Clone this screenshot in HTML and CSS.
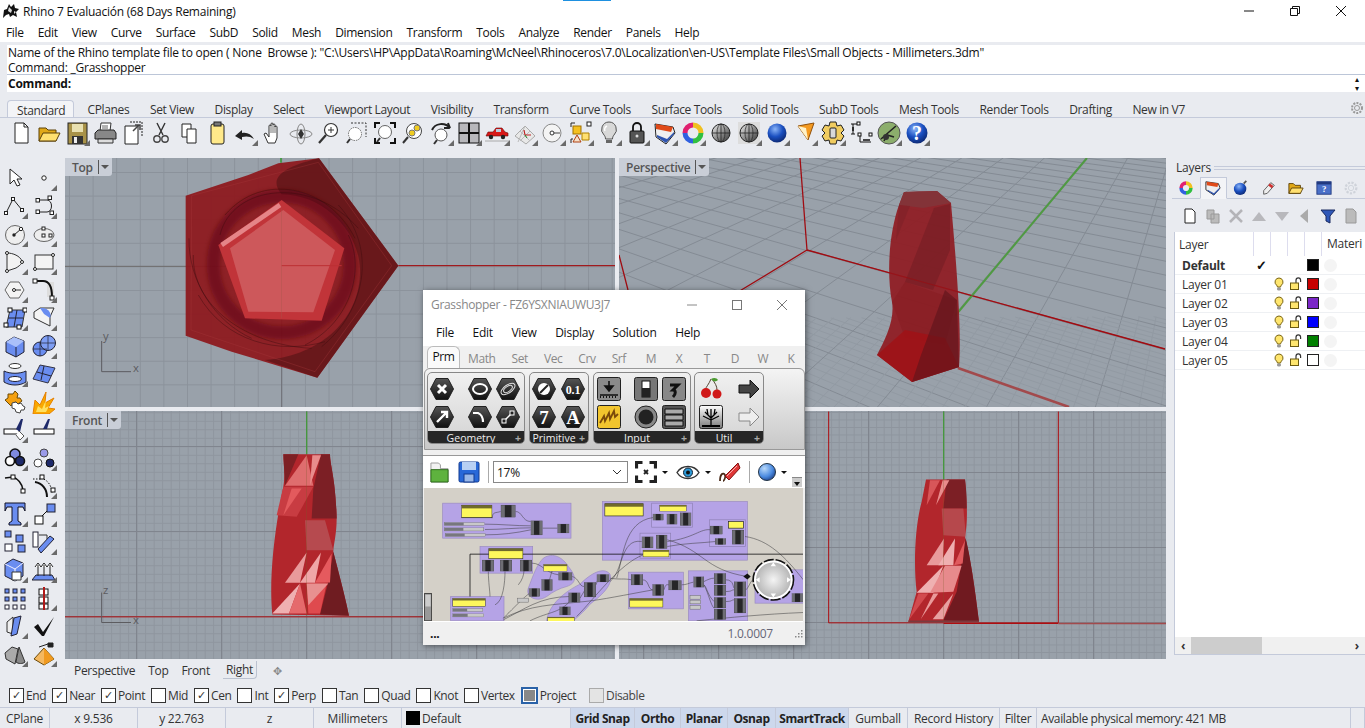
FILE: index.html
```html
<!DOCTYPE html>
<html lang="en">
  <head>
    <meta charset="UTF-8" />
    <title>Rhino 7</title>
    <link rel="stylesheet" href="styles.css">
  </head>
  <body>
    <svg class="defs" width="0" height="0">
      <defs>
        <linearGradient id="sphere" x1="0" y1="0" x2="1" y2="1"><stop offset="0" stop-color="#eee"/><stop offset="1" stop-color="#333"/></linearGradient>
        <radialGradient id="bluesphere" cx=".4" cy=".3" r=".8"><stop offset="0" stop-color="#8ab4f8"/><stop offset=".5" stop-color="#1a4fc0"/><stop offset="1" stop-color="#0a1f60"/></radialGradient>
        <radialGradient id="ghball" cx=".35" cy=".3" r=".8"><stop offset="0" stop-color="#b8d8fa"/><stop offset=".6" stop-color="#4a8ae0"/><stop offset="1" stop-color="#1a3a80"/></radialGradient>
        <radialGradient id="knob" cx=".5" cy=".5" r=".5"><stop offset="0" stop-color="#f4f4f4"/><stop offset="1" stop-color="#b4b4b4"/></radialGradient>
        <linearGradient id="hexfill" x1="0" y1="0" x2="0" y2="1"><stop offset="0" stop-color="#555"/><stop offset="1" stop-color="#111"/></linearGradient>
        <linearGradient id="treesky" x1="0" y1="0" x2="0" y2="1"><stop offset="0" stop-color="#fff"/><stop offset="1" stop-color="#777"/></linearGradient>
        <filter id="soft" x="-20%" y="-20%" width="140%" height="140%"><feGaussianBlur stdDeviation="7"/></filter>
        <symbol id="hex" viewBox="0 0 24 24"><path d="M6 1.500h12L23.500 12 18 22.500H6L.5 12z" fill="url(#hexfill)" stroke="#222"/></symbol>
        <symbol id="bulb" viewBox="0 0 12 14"><path d="M6 1a4 4 0 0 0-2.400 7.200c.6.6.8 1.200.8 1.800h3.200c0-.6.2-1.200.8-1.800A4 4 0 0 0 6 1z" fill="#ffe66e" stroke="#7a6410"/><path d="M4.700 11h2.600v2H4.700z" fill="#bbb" stroke="#666" stroke-width=".6"/></symbol>
        <symbol id="lock" viewBox="0 0 14 14"><path d="M7 6V3.200a2.300 2.300 0 0 1 4.600 0V5" fill="none" stroke="#333" stroke-width="1.200"/><rect x="1.500" y="6" width="8" height="6.500" fill="#ffe66e" stroke="#6a5a10"/></symbol>
        <symbol id="gc" viewBox="0 0 36 36" preserveAspectRatio="none"><rect x=".5" y=".5" width="35" height="35" fill="#6e6e74" stroke="#333"/><rect x="10" y="1" width="16" height="34" fill="#262628"/></symbol>
        <symbol id="gs" viewBox="0 0 122 11" preserveAspectRatio="none"><rect x=".5" y=".5" width="121" height="10" fill="#c8c8c8" stroke="#444"/><rect x="1" y="1" width="58" height="9" fill="#77777d"/></symbol>
        <symbol id="gy" viewBox="0 0 100 30" preserveAspectRatio="none"><rect x="1" y="1" width="98" height="28" fill="#fdf75c" stroke="#222" stroke-width="2"/><rect x="1" y="1" width="98" height="7" fill="#6f6a2c"/></symbol>
      </defs>
    </svg>

    <div class="app">
      <header class="titlebar">
        <svg class="rhino-logo" viewBox="0 0 18 18"><path d="M1 16l1-8 3-1 2-5 2 3 3-3 1 4 4 1-3 3 1 5-4-2-3 2-1-3-3 1z" fill="#111"/><path d="M7 5l3 3-1 3-3-2zM12 9l2 1-2 2z" fill="#ddd"/></svg>
        <span class="title-text">Rhino 7 Evaluación (68 Days Remaining)</span>
        <i class="title-accent"></i>
        <div class="win-buttons">
          <svg width="12" height="12" viewBox="0 0 12 12"><path d="M1 6h10" stroke="#111"/></svg>
          <svg width="12" height="12" viewBox="0 0 12 12"><path d="M1.500 3.500h7v7h-7zM3.500 3.500v-2h7v7h-2" fill="none" stroke="#111"/></svg>
          <svg width="12" height="12" viewBox="0 0 12 12"><path d="M1 1l10 10M11 1L1 11" stroke="#111"/></svg>
        </div>
      </header>

      <nav class="menubar">
        <span>File</span><span>Edit</span><span>View</span><span>Curve</span><span>Surface</span><span>SubD</span><span>Solid</span><span>Mesh</span><span>Dimension</span><span>Transform</span><span>Tools</span><span>Analyze</span><span>Render</span><span>Panels</span><span>Help</span>
      </nav>

      <section class="command">
        <div class="cmd-history">
          <div>Name of the Rhino template file to open ( None&nbsp; Browse ): "C:\Users\HP\AppData\Roaming\McNeel\Rhinoceros\7.0\Localization\en-US\Template Files\Small Objects - Millimeters.3dm"</div>
          <div>Command: _Grasshopper</div>
        </div>
        <div class="cmd-input">Command:</div>
        <div class="cmd-scroll"><span>▴</span><span>▾</span></div>
      </section>

      <div class="toolbar-tabs">
        <span class="tab active">Standard</span><span class="tab">CPlanes</span><span class="tab">Set View</span><span class="tab">Display</span><span class="tab">Select</span><span class="tab">Viewport Layout</span><span class="tab">Visibility</span><span class="tab">Transform</span><span class="tab">Curve Tools</span><span class="tab">Surface Tools</span><span class="tab">Solid Tools</span><span class="tab">SubD Tools</span><span class="tab">Mesh Tools</span><span class="tab">Render Tools</span><span class="tab">Drafting</span><span class="tab">New in V7</span>
        <svg class="gear" viewBox="0 0 16 16"><circle cx="8" cy="8" r="5" fill="none" stroke="#999" stroke-width="2" stroke-dasharray="2 1.200"/><circle cx="8" cy="8" r="2.500" fill="none" stroke="#999"/></svg>
      </div>

      <div class="iconbar">
        <div class="tool"><svg viewBox="0 0 24 24"><path d="M6 2h9l4 4v16H6z" fill="#fff" stroke="#222"/><path d="M15 2v4h4" fill="none" stroke="#222"/></svg></div>
        <div class="tool"><svg viewBox="0 0 24 24"><path d="M2 20V7h7l2 2h8v11z" fill="#e0a818" stroke="#5a4008"/><path d="M2 20l4-8h17l-4 8z" fill="#ffe070" stroke="#5a4008"/></svg></div>
        <div class="tool more"><svg viewBox="0 0 24 24"><rect x="3" y="2" width="19" height="21" fill="#a89248" stroke="#222"/><rect x="7" y="3" width="11" height="8" fill="#e8e0b0"/><rect x="7" y="15" width="11" height="8" fill="#333"/><rect x="9" y="16" width="3" height="6" fill="#eee"/></svg></div>
        <div class="tool"><svg viewBox="0 0 24 24"><path d="M8 2h10l-1 8H7z" fill="#fff" stroke="#333"/><path d="M2 12l3-3h16l2 3v6H2z" fill="#888" stroke="#222"/><path d="M5 18h15v4H5z" fill="#ddd" stroke="#333"/><path d="M9 5h6M9 7h6" stroke="#666"/></svg></div>
        <div class="tool"><svg viewBox="0 0 24 24"><path d="M4 5h13v18H4z" fill="#fff" stroke="#222"/><path d="M9 1h12v14" fill="none" stroke="#222" stroke-dasharray="2 1"/><path d="M12 10l6-6M14 4h5v5" fill="none" stroke="#444" stroke-width="1.500"/></svg></div>
        <div class="tool"><svg viewBox="0 0 24 24"><path d="M8 2l6 12M16 2l-6 12" stroke="#333" stroke-width="1.400"/><circle cx="8" cy="18" r="3.200" fill="none" stroke="#444" stroke-width="1.400"/><circle cx="16" cy="18" r="3.200" fill="none" stroke="#444" stroke-width="1.400"/></svg></div>
        <div class="tool"><svg viewBox="0 0 24 24"><path d="M5 3h9v13H5z" fill="#fff" stroke="#222"/><path d="M10 8h9v14h-9z" fill="#fff" stroke="#222"/></svg></div>
        <div class="tool"><svg viewBox="0 0 24 24"><rect x="6" y="3" width="13" height="20" rx="2" fill="#ffe98a" stroke="#222"/><rect x="9" y="1" width="7" height="4" fill="#777" stroke="#222"/></svg></div>
        <div class="tool more"><svg viewBox="0 0 24 24"><path d="M2 15l7-6v3c5-1 9 1 12 6-4-3-8-3-12-2v3z" fill="#222"/></svg></div>
        <div class="tool"><svg viewBox="0 0 24 24"><path d="M7 22l-4-9 2-1 3 4V5a1 1 0 0 1 2 0v-2a1 1 0 0 1 2 0v1a1 1 0 0 1 2 0v2a1 1 0 0 1 2 0v11l-2 5z" fill="#fff" stroke="#333"/><path d="M10 5v7M12 4v8M14 5v7" stroke="#333" stroke-width=".7"/></svg></div>
        <div class="tool"><svg viewBox="0 0 24 24"><ellipse cx="12" cy="13" rx="11" ry="4" fill="none" stroke="#888"/><ellipse cx="12" cy="13" rx="4" ry="10" fill="none" stroke="#888"/><path d="M12 8l3 5-3 5-3-5z" fill="#333"/></svg></div>
        <div class="tool"><svg viewBox="0 0 24 24"><circle cx="14" cy="9" r="6.500" fill="#fff" stroke="#333" stroke-width="1.200"/><path d="M14 6v6M11 9h6" stroke="#333"/><path d="M9 14l-7 8" stroke="#333" stroke-width="2.200"/></svg></div>
        <div class="tool"><svg viewBox="0 0 24 24"><circle cx="10" cy="13" r="6.500" fill="#fff" stroke="#666" stroke-dasharray="1.500 1"/><path d="M6 2h15v14" fill="none" stroke="#333" stroke-dasharray="2 1.500"/><path d="M5 18l-3 4" stroke="#333" stroke-width="2"/></svg></div>
        <div class="tool"><svg viewBox="0 0 24 24"><circle cx="12" cy="11" r="6.500" fill="#fff" stroke="#666"/><path d="M7 17l-3 4" stroke="#333" stroke-width="2"/><path d="M2 7V2h5M17 2h5v5M22 17v5h-5M7 22H2v-5" fill="none" stroke="#111" stroke-width="2"/></svg></div>
        <div class="tool"><svg viewBox="0 0 24 24"><circle cx="13" cy="10" r="7.500" fill="#fff" stroke="#444"/><circle cx="11" cy="12" r="3" fill="#f0cc20" stroke="#777"/><circle cx="16" cy="7" r="3" fill="#f0cc20" stroke="#777"/><path d="M7 16l-5 6" stroke="#333" stroke-width="2"/></svg></div>
        <div class="tool more"><svg viewBox="0 0 24 24"><circle cx="12" cy="14" r="6" fill="#fff" stroke="#555"/><path d="M8 19l-3 4" stroke="#333" stroke-width="2"/><path d="M3 9c3-7 13-8 18-2l-2-5M21 7l-6 0" fill="none" stroke="#222" stroke-width="2"/></svg></div>
        <div class="tool more"><svg viewBox="0 0 24 24"><rect x="2" y="2" width="20" height="20" fill="#b8b8bc" stroke="#111"/><path d="M12 2v20M2 12h20" stroke="#111" stroke-width="2"/></svg></div>
        <div class="tool more"><svg viewBox="0 0 24 24"><path d="M1 15l2-4h5l3-4h6l3 4 3 1v3z" fill="#d81818" stroke="#6a0808" stroke-width=".6"/><path d="M11 8h5v3h-5z" fill="#bcd"/><circle cx="6" cy="16" r="2.200" fill="#222"/><circle cx="18" cy="16" r="2.200" fill="#222"/><path d="M0 20h24" stroke="#aaa"/></svg></div>
        <div class="tool more"><svg viewBox="0 0 24 24"><path d="M2 15L12 5l10 10-9 8z" fill="#e8e8e8" stroke="#aaa"/><path d="M7 10l10 10M12 5l-7 16M17 10L7 20" stroke="#bbb"/><path d="M12 14h6M12 14l-1-5" stroke="#b22" stroke-width="1.200"/><path d="M12 14l2 3" stroke="#282"/></svg></div>
        <div class="tool more"><svg viewBox="0 0 24 24"><circle cx="11" cy="12" r="9" fill="#f4f4f4" stroke="#888"/><path d="M11 12h8" stroke="#444"/><circle cx="11" cy="12" r="2" fill="#fff" stroke="#333"/></svg></div>
        <div class="tool more"><svg viewBox="0 0 24 24"><path d="M2 6V2h4M18 2h4M2 22v-4h2" fill="none" stroke="#222"/><rect x="18" y="1" width="4" height="4" fill="#fff" stroke="#222"/><rect x="4" y="5" width="8" height="8" fill="#f4c020" stroke="#a07000"/><path d="M13 12h7v7h-7z" fill="#ffe070" stroke="#b08000"/><path d="M8 14l4 7H4z" fill="#f6e0c8" stroke="#b04010"/></svg></div>
        <div class="tool more"><svg viewBox="0 0 24 24"><path d="M12 1a7.500 7.500 0 0 0-5 13c1 1 1.500 2.500 1.500 4h7c0-1.500.5-3 1.500-4A7.500 7.500 0 0 0 12 1z" fill="#d8d8d8" stroke="#555"/><path d="M9 19h6v3H9z" fill="#666"/><path d="M10 5c-2 1-3 3-2 5" fill="none" stroke="#fff" stroke-width="1.400"/></svg></div>
        <div class="tool more"><svg viewBox="0 0 24 24"><rect x="5" y="10" width="14" height="12" rx="1" fill="#555" stroke="#111"/><path d="M8 10V6a4 4 0 0 1 8 0v4" fill="none" stroke="#111" stroke-width="1.800"/><circle cx="12" cy="15" r="1.500" fill="#ddd"/></svg></div>
        <div class="tool more"><svg viewBox="0 0 24 24"><path d="M2 3l18 3 2 6-9 11-10-7z" fill="#eee" stroke="#222"/><path d="M3 3l17 3-2 5-15-3z" fill="#e04a18"/><path d="M3 9l15 3-4 5-10-4z" fill="#f0f0f0"/><path d="M4 14l10 4 7-7v2l-8 9-9-6z" fill="#2f54b0"/></svg></div>
        <div class="tool more"><svg viewBox="0 0 24 24"><path d="M12 4a8 8 0 0 1 8 8" fill="none" stroke="#f0c020" stroke-width="5"/><path d="M20 12a8 8 0 0 1-8 8" fill="none" stroke="#30c040" stroke-width="5"/><path d="M12 20a8 8 0 0 1-8-8" fill="none" stroke="#3060e0" stroke-width="5"/><path d="M4 12a8 8 0 0 1 8-8" fill="none" stroke="#e02070" stroke-width="5"/></svg></div>
        <div class="tool"><svg viewBox="0 0 24 24"><circle cx="12" cy="12" r="9" fill="url(#sphere)" stroke="#222"/><path d="M12 3v18M3 12h18" stroke="#222" stroke-width=".8"/><ellipse cx="12" cy="12" rx="4" ry="9" fill="none" stroke="#222" stroke-width=".7"/></svg></div>
        <div class="tool more"><svg viewBox="0 0 24 24"><rect x="1" y="1" width="22" height="22" fill="#ddd"/><circle cx="12" cy="12" r="9" fill="url(#sphere)" stroke="#222"/><path d="M12 3v18M3 12h18" stroke="#222" stroke-width=".8"/><ellipse cx="12" cy="12" rx="4" ry="9" fill="none" stroke="#222" stroke-width=".7"/></svg></div>
        <div class="tool more"><svg viewBox="0 0 24 24"><circle cx="12" cy="12" r="9.500" fill="url(#bluesphere)"/></svg></div>
        <div class="tool more"><svg viewBox="0 0 24 24"><path d="M5 5l16-3-6 17z" fill="#f49a20" stroke="#90500a"/><path d="M5 5l8 2 2 12z" fill="#fff2c8"/></svg></div>
        <div class="tool more"><svg viewBox="0 0 24 24"><path d="M9 1h6l1 4 4-1 3 5-3 3 3 3-3 5-4-1-1 4H9l-1-4-4 1-3-5 3-3-3-3 3-5 4 1z" fill="#f0cc60" stroke="#222"/><rect x="9" y="7" width="6" height="10" rx="1" fill="#d8d8d8" stroke="#222"/></svg></div>
        <div class="tool"><svg viewBox="0 0 24 24"><path d="M2 3h7M4 3v10M2 13h4M11 13v8h11M2 3" fill="none" stroke="#111"/><rect x="8" y="1" width="3" height="3" fill="#fff" stroke="#111"/><rect x="9" y="12" width="3" height="3" fill="#fff" stroke="#111"/><rect x="20" y="12" width="3" height="3" fill="#fff" stroke="#111"/><path d="M4 6v4M14 19h7" stroke="#111" stroke-width="1.500"/></svg></div>
        <div class="tool more"><svg viewBox="0 0 24 24"><circle cx="12" cy="12" r="11" fill="#8cae6c" stroke="#555"/><path d="M4 18l8-7 7-6M7 20l3-6 7 2" stroke="#222" stroke-width="1.600" fill="none"/><circle cx="9" cy="16" r="3" fill="#333"/></svg></div>
        <div class="tool more"><svg viewBox="0 0 24 24"><circle cx="12" cy="12" r="10.500" fill="url(#bluesphere)"/><text class="help-mark" x="12" y="19" text-anchor="middle">?</text></svg></div>
      </div>

      <main class="main">
        <aside class="sidetools">
          <div class="stool"><svg viewBox="0 0 24 24"><path d="M7 3v15l4-4 3 6 3-1-3-6h5z" fill="#fff" stroke="#222"/></svg></div>
          <div class="stool more"><svg viewBox="0 0 24 24"><circle cx="12" cy="12" r="2.200" fill="#fff" stroke="#222"/></svg></div>
          <div class="stool more"><svg viewBox="0 0 24 24"><path d="M3 19l7-14 9 11" fill="none" stroke="#222"/><rect x="1.500" y="17.500" width="3" height="3" fill="#fff" stroke="#222"/><rect x="8.500" y="3.500" width="3" height="3" fill="#fff" stroke="#222"/><rect x="17.500" y="14.500" width="3" height="3" fill="#fff" stroke="#222"/></svg></div>
          <div class="stool more"><svg viewBox="0 0 24 24"><path d="M6 6h9c6 0 6 12 0 12H6" fill="none" stroke="#222"/><rect x="4" y="4.500" width="3.500" height="3.500" fill="#fff" stroke="#222"/><rect x="16" y="2" width="3.500" height="3.500" fill="#fff" stroke="#222"/><rect x="4" y="16" width="3.500" height="3.500" fill="#fff" stroke="#222"/><rect x="18" y="17" width="3.500" height="3.500" fill="#fff" stroke="#222"/></svg></div>
          <div class="stool more"><svg viewBox="0 0 24 24"><circle cx="12" cy="13" r="9.500" fill="#eee" stroke="#666"/><path d="M11 13l7-6" stroke="#222"/><circle cx="11" cy="13" r="1.700" fill="#222"/><circle cx="18" cy="7" r="1.700" fill="#fff" stroke="#222"/></svg></div>
          <div class="stool more"><svg viewBox="0 0 24 24"><ellipse cx="12" cy="13" rx="10" ry="6.500" fill="#eee" stroke="#666"/><rect x="10" y="5" width="3" height="3" fill="#fff" stroke="#222"/><rect x="10" y="12" width="3" height="3" fill="#fff" stroke="#222"/><rect x="17" y="12" width="3" height="3" fill="#fff" stroke="#222"/></svg></div>
          <div class="stool more"><svg viewBox="0 0 24 24"><path d="M4 3v18l9-3c5-3 7-6 6-7C17 6 10 3 4 3z" fill="#f2f2f2" stroke="#333"/><circle cx="4" cy="21" r="1.500" fill="#fff" stroke="#222"/><circle cx="4" cy="3" r="1.500" fill="#fff" stroke="#222"/><circle cx="19" cy="12" r="1.500" fill="#fff" stroke="#222"/></svg></div>
          <div class="stool more"><svg viewBox="0 0 24 24"><rect x="3" y="5" width="18" height="14" fill="#f4f4f4" stroke="#333"/><circle cx="3" cy="19" r="1.500" fill="#fff" stroke="#222"/><circle cx="21" cy="5" r="1.500" fill="#fff" stroke="#222"/></svg></div>
          <div class="stool more"><svg viewBox="0 0 24 24"><path d="M7 4h9l5 8-5 8H7l-5-8z" fill="#f4f4f4" stroke="#666"/><path d="M11 12h7" stroke="#333"/><circle cx="11" cy="12" r="1.500" fill="#fff" stroke="#222"/></svg></div>
          <div class="stool more"><svg viewBox="0 0 24 24"><rect x="15" y="4" width="7" height="15" fill="#ddd"/><path d="M3 3h8c7 0 9 8 9 16" fill="none" stroke="#111" stroke-width="2"/><rect x="1" y="1" width="4" height="4" fill="#fff" stroke="#222"/><rect x="18" y="18" width="4" height="4" fill="#fff" stroke="#222"/></svg></div>
          <div class="stool more"><svg viewBox="0 0 24 24"><path d="M7 4h15l-3 17H3z" fill="#6a8df0" stroke="#333"/><path d="M5 12h15M14 4l-3 17" stroke="#223"/><rect x="5" y="2" width="4" height="4" fill="#fff" stroke="#111"/><rect x="20" y="2" width="4" height="4" fill="#fff" stroke="#111"/><rect x="1" y="17" width="4" height="4" fill="#fff" stroke="#111"/><rect x="14" y="19" width="4" height="4" fill="#fff" stroke="#111"/></svg></div>
          <div class="stool more"><svg viewBox="0 0 24 24"><path d="M2 6l6-4h14l-4 9v9l-16-8z" fill="#f4f4f4" stroke="#333"/><path d="M8 2c9-1 12 6 10 10L12 8z" fill="#6a8df0"/></svg></div>
          <div class="stool"><svg viewBox="0 0 24 24"><path d="M3 8l8-5 10 4v11l-8 5-10-5z" fill="#6a8df0" stroke="#223"/><path d="M3 8l10 5 8-6-10-4z" fill="#aac0fa"/><path d="M13 13v10" stroke="#223"/></svg></div>
          <div class="stool more"><svg viewBox="0 0 24 24"><circle cx="8" cy="15" r="7" fill="#6a8df0" stroke="#223"/><circle cx="16" cy="9" r="7.500" fill="#7e9ef4" stroke="#223"/><path d="M9 9h14M16 2v14M1 15h14M8 8v14" stroke="#223" stroke-width=".7"/></svg></div>
          <div class="stool more"><svg viewBox="0 0 24 24"><ellipse cx="12" cy="4" rx="6" ry="2.500" fill="#fff" stroke="#333"/><path d="M1 9c6 3 16 3 22 0v11c-6 4-16 4-22 0z" fill="#6a8df0" stroke="#223"/><ellipse cx="12" cy="17" rx="6.500" ry="2.500" fill="#fff" stroke="#223"/></svg></div>
          <div class="stool more"><svg viewBox="0 0 24 24"><path d="M8 3l15 3-7 15-15-4z" fill="#6a8df0" stroke="#334"/><path d="M5 10l14 4M12 4l-3 14" stroke="#223"/></svg></div>
          <div class="stool"><svg viewBox="0 0 24 24"><path d="M2 10l3-2V4h5l2-3 3 3-1 4h3l2 3-4 3-2-2-3 1-2 3-3-3z" fill="#f4a010" stroke="#6a4a08"/><path d="M9 13l4-1 2 2 3-1 2 3 2 1-1 3-3 0-1 3-4-1-1-3-3-1z" fill="#fff" stroke="#444"/></svg></div>
          <div class="stool"><svg viewBox="0 0 24 24"><path d="M1 24L3 10l5 5 6-13-1 11 9-5-6 10 7 1-6 5z" fill="#f9a800" stroke="#e68000"/><path d="M4 22l2-6 4 3 4-9-1 8 4-2-3 6z" fill="#ffe060"/></svg></div>
          <div class="stool more"><svg viewBox="0 0 24 24"><rect x="1" y="11" width="15" height="5" fill="#fff" stroke="#111"/><path d="M13 11l5-10 2 0-3 13z" fill="#1e2a6a"/><path d="M16 13l5 5-4 4-4-5" fill="#fff" stroke="#555"/></svg></div>
          <div class="stool"><svg viewBox="0 0 24 24"><rect x="2" y="11" width="20" height="5" fill="#fff" stroke="#111"/><path d="M11 11l5-10 2 0-3 10z" fill="#1e2a6a"/></svg></div>
          <div class="stool more"><svg viewBox="0 0 24 24"><circle cx="12" cy="8" r="5" fill="#7e8ae0" stroke="#111" stroke-width="1.600"/><circle cx="7" cy="15" r="4.500" fill="#fff" stroke="#111" stroke-width="1.600"/><circle cx="17" cy="15" r="4.500" fill="#1e2a6a" stroke="#111" stroke-width="1.600"/></svg></div>
          <div class="stool more"><svg viewBox="0 0 24 24"><circle cx="12" cy="7" r="4" fill="#9a9ae8" stroke="#444"/><circle cx="6" cy="17" r="4" fill="#fff" stroke="#444"/><circle cx="18" cy="17" r="4" fill="#1e2a6a" stroke="#111"/></svg></div>
          <div class="stool"><svg viewBox="0 0 24 24"><path d="M2 4l8-1c5 2 9 6 10 13" fill="none" stroke="#111" stroke-width="1.600"/><rect x="8" y="1" width="4" height="4" fill="#fff" stroke="#111"/><rect x="18" y="15" width="4" height="4" fill="#fff" stroke="#111"/></svg></div>
          <div class="stool more"><svg viewBox="0 0 24 24"><path d="M1 5h8" stroke="#111" stroke-dasharray="1.500 1.500"/><path d="M9 4c7 2 11 8 11 16" fill="none" stroke="#111" stroke-dasharray="1.500 1.500"/><path d="M3 8c7 1 12 7 12 15" fill="none" stroke="#111" stroke-width="2"/><rect x="8" y="1" width="4" height="4" fill="#fff" stroke="#111"/><rect x="19" y="14" width="4" height="4" fill="#fff" stroke="#111"/></svg></div>
          <div class="stool more"><svg viewBox="0 0 24 24"><path d="M2 1h20v8l-2-4h-5v14l3 2v2H6v-2l3-2V5H4L2 9z" fill="#6a8df0" stroke="#112"/></svg></div>
          <div class="stool more"><svg viewBox="0 0 24 24"><rect x="3" y="14" width="8" height="8" fill="#fff" stroke="#111"/><rect x="15" y="2" width="8" height="8" fill="#6a8df0" stroke="#223"/><path d="M10 14l5-5" stroke="#111"/></svg></div>
          <div class="stool"><svg viewBox="0 0 24 24"><rect x="2" y="1" width="6" height="6" fill="#6a8df0" stroke="#223"/><rect x="13" y="5" width="7" height="7" fill="#6a8df0" stroke="#223"/><rect x="2" y="14" width="7" height="7" fill="#fff" stroke="#223"/><rect x="15" y="15" width="7" height="7" fill="#6a8df0" stroke="#223"/></svg></div>
          <div class="stool more"><svg viewBox="0 0 24 24"><rect x="1" y="2" width="5" height="15" fill="#fff" stroke="#223"/><path d="M9 23l13-14-4-3L6 19z" fill="#6a8df0" stroke="#223"/><path d="M7 5h8l0 4" fill="none" stroke="#333"/></svg></div>
          <div class="stool more"><svg viewBox="0 0 24 24"><path d="M2 6l8-5 10 4v13l-8 5-10-5z" fill="#6a8df0" stroke="#223"/><path d="M2 6l10 5 8-6" fill="none" stroke="#eef"/><path d="M12 11v12" stroke="#fff"/><path d="M9 14h9v8H9z" fill="#fff" stroke="#333"/></svg></div>
          <div class="stool more"><svg viewBox="0 0 24 24"><path d="M4 17h16l3 5H0z" fill="#6a8df0" stroke="#223"/><path d="M6 18V7M3 9l3-4 3 4M12 18V7M9 9l3-4 3 4M18 18V7M15 9l3-4 3 4" fill="#fff" stroke="#222"/></svg></div>
          <div class="stool"><svg viewBox="0 0 24 24"><g fill="#6a8df0" stroke="#223"><rect x="2" y="3" width="4" height="4"/><rect x="10" y="3" width="4" height="4"/><rect x="18" y="3" width="4" height="4"/><rect x="2" y="11" width="4" height="4"/><rect x="10" y="11" width="4" height="4"/><rect x="18" y="11" width="4" height="4"/><rect x="2" y="19" width="4" height="4" fill="#fff"/><rect x="10" y="19" width="4" height="4" fill="#fff"/><rect x="18" y="19" width="4" height="4" fill="#fff"/></g></svg></div>
          <div class="stool more"><svg viewBox="0 0 24 24"><rect x="7" y="3" width="9" height="6" fill="#fff" stroke="#111"/><rect x="7" y="11" width="9" height="6" fill="#fff" stroke="#111"/><rect x="7" y="18" width="9" height="5" fill="#fff" stroke="#111"/><path d="M12 1v23" stroke="#b01818" stroke-width="2"/></svg></div>
          <div class="stool more"><svg viewBox="0 0 24 24"><path d="M4 8l6-5v17l-6-2z" fill="#eee" stroke="#333"/><path d="M11 4l7-2-4 18-6 2z" fill="#6a8df0" stroke="#223"/></svg></div>
          <div class="stool"><svg viewBox="0 0 24 24"><path d="M2 13l4-3 5 8L22 3l-10 19h-2z" fill="#111"/></svg></div>
          <div class="stool more"><svg viewBox="0 0 24 24"><path d="M2 11l7-6 6 2-3 15-9-5z" fill="#aaa" stroke="#333"/><path d="M16 5l6 15c-2 2-7 2-9 0z" fill="#888" stroke="#333"/></svg></div>
          <div class="stool more"><svg viewBox="0 0 24 24"><path d="M2 17l10-11 10 11-10 6z" fill="#f4b860" stroke="#6a4a08"/><path d="M12 6l10 11-10 6z" fill="#f09a20"/><path d="M7 5l9-3M16 1h5v4h-5z" fill="#222" stroke="#222"/></svg></div>
        </aside>

        <div class="views">
          <div class="viewport vp-top">
            <svg class="scene" viewBox="0 9 1650 747">
              <path d="M0 334H650" stroke="#6e6a6a" stroke-width="3"/>
              <path d="M650 334V756" stroke="#6e6f76" stroke-width="3"/>
              <path d="M648 9v14" stroke="#3d9a3d" stroke-width="5"/>
              <path d="M1000 332H1650" stroke="#a01a1e" stroke-width="4"/>
              <path d="M110 558V650H198" fill="none" stroke="#5c5c60" stroke-width="3"/>
              <text class="axis-label" x="114" y="556">y</text>
              <text class="axis-label" x="204" y="650">x</text>
              <path d="M762 10L1000 332 757 668 500 590 362 542 362 122 550 60 640 25z" fill="#8d161b" fill-opacity=".92"/>
              <path d="M762 10L1000 332 757 668 600 615C780 600 890 480 885 340 880 230 780 120 650 118 600 60 680 30 762 10z" fill="#5c1518" fill-opacity=".72"/>
              <path d="M380 122L760 22 980 332 750 650 378 525z" fill="none" stroke="#a8383d" stroke-width="2" opacity=".5"/>
              <circle cx="650" cy="328" r="205" fill="none" stroke="#5a0c10" stroke-opacity=".5" stroke-width="40" filter="url(#soft)"/>
              <g fill="none" stroke="#360a0d" stroke-opacity=".4" stroke-width="3">
                <path d="M465 240C500 90 740 60 880 220"/><path d="M480 180C590 50 790 90 870 250"/><path d="M385 300C380 450 540 570 740 580"/><path d="M400 420C480 560 640 600 780 560"/><path d="M820 150C940 280 900 470 770 575"/><path d="M850 240C900 340 860 500 720 570"/><path d="M372 250C370 380 450 500 560 550"/>
              </g>
              <path d="M650 135L838 280 770 497 540 490 460 270z" fill="#c13439"/>
              <path d="M655 165L810 285 745 472 550 470 495 280z" fill="#cd585b"/>
              <path d="M645 150L470 270" stroke="#e58588" stroke-width="14"/>
              <path d="M650 160V490" stroke="#a5564a" stroke-width="2" opacity=".6"/>
              <path d="M650 332H830" stroke="#bd3034" stroke-width="3"/>
            </svg>
            <div class="vp-label"><span>Top</span><i></i></div>
          </div>
          <div class="viewport vp-persp">
            <svg class="scene" id="perspScene" viewBox="619 158 547 249">
              <g id="perspGrid"></g>
              <g fill="none" stroke-width="1.300" stroke="#a00c12">
                <path d="M807 250L800 158M807 250L1165 349M807 250L738 292M619 255L628 290"/>
              </g>
              <path d="M1087 158L955 316" stroke="#4f9a42" stroke-width="2"/>
              <path d="M958 368L1069 407" stroke="#a24a4c" stroke-width="2.500"/>
              <path d="M904 192L937 191 951 203C956 260 962 330 959 367L912 382 877 355C885 340 895 320 892 302 886 270 890 230 899 205z" fill="#8f1c22" fill-opacity=".93"/>
              <path d="M899 205L904 192 937 191 951 203 923 208z" fill="#833338"/>
              <path d="M910 206L899 205 896 240z" fill="#7f2228" fill-opacity=".6"/>
              <path d="M934 208L950 204 950 250 933 290 905 282z" fill="#6e1c22" fill-opacity=".5"/>
              <path d="M892 302L905 282 957 300 945 345 905 338z" fill="#841a20" fill-opacity=".45"/>
              <path d="M877 355L905 330 945 338 959 367 912 382z" fill="#a01216" fill-opacity=".85"/>
              <path d="M921 355L945 290 957 300 959 367 912 382z" fill="#5c141a" fill-opacity=".6"/>
              <path d="M807 250L1165 349" stroke="#a00c12" stroke-width="1" opacity=".5"/>
            </svg>
            <div class="vp-label"><span>Perspective</span><i></i></div>
          </div>
          <div class="viewport vp-front">
            <svg class="scene" viewBox="0 9 1650 741">
              <path d="M0 625H1650" stroke="#ad0d10" stroke-width="3"/>
              <path d="M725 9V137" stroke="#46983e" stroke-width="4"/>
              <path d="M110 552V642H198" fill="none" stroke="#5c5c60" stroke-width="3"/>
              <text class="axis-label" x="114" y="555">z</text>
              <text class="axis-label" x="204" y="645">x</text>
              <path d="M655 137H795C795 170 812 210 815 330 815 380 805 410 805 430 815 470 840 560 852 622L622 618C612 520 625 380 655 235 662 190 655 170 655 137z" fill="#b2262c"/>
              <path d="M768 137L795 137C795 170 812 210 815 330L740 330 745 240z" fill="#7c1f25"/>
              <path d="M805 430C815 470 840 560 852 622L765 618 790 520z" fill="#6f1c21"/>
              <path d="M655 137H700L660 232z" fill="#7d2024"/>
              <path d="M725 140L660 232 745 232z" fill="#df6d6e"/>
              <path d="M742 140L768 140 735 230z" fill="#e88c8c"/>
              <path d="M655 235L745 235 695 325 635 320z" fill="#c83c42"/>
              <path d="M680 240L655 320 710 240z" fill="#e35a5d"/>
              <path d="M720 335L780 335 805 425 725 425z" fill="#b85a5e" opacity=".7"/>
              <path d="M725 432L660 523 705 523z" fill="#e99a9b"/>
              <path d="M768 432L705 523 750 523z" fill="#efa6a7"/>
              <path d="M800 435L750 523 795 522z" fill="#e55a5e"/>
              <path d="M705 525L622 615 672 615z" fill="#efb0b1"/>
              <path d="M705 525L672 615 725 615z" fill="#e56a6c"/>
              <path d="M785 525L725 525 730 615 765 615z" fill="#df4a4e"/>
              <path d="M725 525L790 525 730 590z" fill="#e89090"/>
              <path d="M725 137V622" stroke="#7a5a2a" stroke-width="2" opacity=".5"/>
            </svg>
            <div class="vp-label"><span>Front</span><i></i></div>
          </div>
          <div class="viewport vp-right">
            <svg class="scene" viewBox="-543 9 1641 741">
              <path d="M86 9V643H775V9" fill="none" stroke="#ad0d10" stroke-width="3"/>
              <path d="M431 645H775" stroke="#ad0d10" stroke-width="3"/>
              <path d="M775 645H1098" stroke="#a24a4c" stroke-width="4"/>
              <path d="M431 9V213" stroke="#46983e" stroke-width="4"/>
              <path d="M378 213H495C500 280 505 330 495 385 510 440 525 540 537 640H325L350 550C340 470 345 350 365 280z" fill="#b2262c"/>
              <path d="M440 213H495C500 250 500 280 500 300L430 300z" fill="#7c1f25"/>
              <path d="M497 390C510 440 525 540 537 640L430 636 470 550z" fill="#701a20"/>
              <path d="M390 215L380 290 420 215z" fill="#d85659"/>
              <path d="M448 215L408 290 428 215z" fill="#e88c8c"/>
              <path d="M425 300L490 300 498 385 430 380z" fill="#b85a5e" opacity=".65"/>
              <path d="M432 390L380 470 428 470z" fill="#e99a9b"/>
              <path d="M465 390L415 470 460 470z" fill="#efb0b1"/>
              <path d="M495 395L462 470 488 465z" fill="#e05a5e"/>
              <path d="M430 472L350 553 400 553z" fill="#efb0b1"/>
              <path d="M485 472L435 472 390 553 460 550z" fill="#e78a8c"/>
              <path d="M400 555L362 632 415 555z" fill="#ea9a9b"/>
              <path d="M460 555L398 632 430 632z" fill="#e8a0a0"/>
              <path d="M355 555L328 632 385 555z" fill="#d24a4e"/>
              <path d="M325 636H537V641H325z" fill="#7c3a3e"/>
              <path d="M431 213V640" stroke="#7a5a2a" stroke-width="2" opacity=".45"/>
            </svg>
          </div>
        </div>

        <aside class="layers">
          <div class="layers-head"><span>Layers</span><i></i></div>
          <div class="layers-tabs">
            <div class="ltab"><svg viewBox="0 0 18 18"><path d="M9 3.500a5.500 5.500 0 0 1 5.500 5.500" fill="none" stroke="#f0c020" stroke-width="4"/><path d="M14.500 9A5.500 5.500 0 0 1 9 14.500" fill="none" stroke="#30c040" stroke-width="4"/><path d="M9 14.500A5.500 5.500 0 0 1 3.500 9" fill="none" stroke="#3060e0" stroke-width="4"/><path d="M3.500 9A5.500 5.500 0 0 1 9 3.500" fill="none" stroke="#e02070" stroke-width="4"/></svg></div>
            <div class="ltab active"><svg viewBox="0 0 18 18"><path d="M1 2l14 2 2 5-7 8-9-6z" fill="#eee" stroke="#222"/><path d="M2 2l13 2-1 4L2 6z" fill="#e04a18"/><path d="M3 11l7 4 6-6v2l-6 6-7-5z" fill="#2f54b0"/></svg></div>
            <div class="ltab"><svg viewBox="0 0 18 18"><circle cx="8" cy="10" r="7" fill="url(#bluesphere)"/><path d="M12 4l3-3" stroke="#555" stroke-width="2"/></svg></div>
            <div class="ltab"><svg viewBox="0 0 18 18"><path d="M3 12l8-9 4 3-8 9-4 1z" fill="#eee" stroke="#555"/><path d="M9 5l4 3" stroke="#d03030" stroke-width="3"/></svg></div>
            <div class="ltab"><svg viewBox="0 0 18 18"><path d="M1 15V4h5l2 2h6v9z" fill="#e0a818" stroke="#5a4008"/><path d="M1 15l3-6h13l-3 6z" fill="#ffe070" stroke="#5a4008"/></svg></div>
            <div class="ltab"><svg viewBox="0 0 18 18"><rect x="1" y="2" width="16" height="14" fill="#4a70c8" stroke="#223a80"/><rect x="1" y="2" width="16" height="3" fill="#223a80"/><text class="help-small" x="9" y="14" text-anchor="middle">?</text></svg></div>
            <div class="ltab faded"><svg viewBox="0 0 18 18"><circle cx="9" cy="9" r="6" fill="none" stroke="#cfd3da" stroke-width="2.500" stroke-dasharray="2.500 1.500"/><circle cx="9" cy="9" r="3" fill="none" stroke="#cfd3da"/></svg></div>
          </div>
          <div class="layers-tools">
            <svg viewBox="0 0 16 16"><path d="M3 1h7l3 3v11H3z" fill="#fff" stroke="#222"/></svg>
            <svg viewBox="0 0 16 16"><path d="M2 2h7v9H2zM6 6h8v9H6z" fill="#bbb" stroke="#999"/></svg>
            <svg viewBox="0 0 16 16"><path d="M2 2l12 12M14 2L2 14" stroke="#b4b4b8" stroke-width="2.500"/></svg>
            <svg viewBox="0 0 16 16"><path d="M1 13L8 4l7 9z" fill="#b8b8bc"/></svg>
            <svg viewBox="0 0 16 16"><path d="M1 4l7 9 7-9z" fill="#b8b8bc"/></svg>
            <svg viewBox="0 0 16 16"><path d="M11 1v14L3 8z" fill="#aaa"/></svg>
            <svg viewBox="0 0 16 16"><path d="M1 2h14L10 8v7l-4-2V8z" fill="#3058b8" stroke="#1a2a60"/></svg>
            <svg viewBox="0 0 16 16"><path d="M3 1h7l3 3v11H3z" fill="#bbb" stroke="#999"/></svg>
          </div>
          <div class="layers-box">
            <div class="layers-header">
              <span class="col-name">Layer</span><span class="col"></span><span class="col"></span><span class="col"></span><span class="col"></span><span class="col-mat">Materi</span>
            </div>
            <div class="layer-row default"><span class="col-name">Default</span><span class="lcheck">✓</span><span></span><span></span><i class="swatch sw-black"></i><b class="mat"></b></div>
            <div class="layer-row"><span class="col-name">Layer 01</span><span></span><svg><use href="#bulb"/></svg><svg><use href="#lock"/></svg><i class="swatch sw-red"></i><b class="mat"></b></div>
            <div class="layer-row"><span class="col-name">Layer 02</span><span></span><svg><use href="#bulb"/></svg><svg><use href="#lock"/></svg><i class="swatch sw-purple"></i><b class="mat"></b></div>
            <div class="layer-row"><span class="col-name">Layer 03</span><span></span><svg><use href="#bulb"/></svg><svg><use href="#lock"/></svg><i class="swatch sw-blue"></i><b class="mat"></b></div>
            <div class="layer-row"><span class="col-name">Layer 04</span><span></span><svg><use href="#bulb"/></svg><svg><use href="#lock"/></svg><i class="swatch sw-green"></i><b class="mat"></b></div>
            <div class="layer-row"><span class="col-name">Layer 05</span><span></span><svg><use href="#bulb"/></svg><svg><use href="#lock"/></svg><i class="swatch sw-white"></i><b class="mat"></b></div>
            <div class="layers-fill"></div>
            <div class="hscroll"><span>‹</span><div class="hscroll-thumb"></div><span>›</span></div>
          </div>
        </aside>
      </main>

      <div class="vp-tabs">
        <span>Perspective</span><span>Top</span><span>Front</span><span class="active">Right</span><span class="plus">✥</span>
      </div>

      <div class="osnap">
        <label class="on">End</label><label class="on">Near</label><label class="on">Point</label><label>Mid</label><label class="on">Cen</label><label>Int</label><label class="on">Perp</label><label>Tan</label><label>Quad</label><label>Knot</label><label>Vertex</label><label class="project">Project</label><label class="disable">Disable</label>
      </div>

      <footer class="statusbar">
        <span>CPlane</span><span>x 9.536</span><span>y 22.763</span><span>z</span><span>Millimeters</span>
        <span class="layer-cell"><i></i>Default</span>
        <span class="pressed">Grid Snap</span><span class="pressed">Ortho</span><span class="pressed">Planar</span><span class="pressed">Osnap</span><span class="pressed">SmartTrack</span>
        <span>Gumball</span><span>Record History</span><span>Filter</span><span class="memory">Available physical memory: 421 MB</span><span></span>
      </footer>
    </div>

    <!-- grasshopper floats over the viewports -->
    <div class="gh">
      <div class="gh-title">
        <span>Grasshopper - FZ6YSXNIAUWU3J7</span>
        <div class="gh-winbtns">
          <svg width="12" height="12" viewBox="0 0 12 12"><path d="M1 6h10" stroke="#888"/></svg>
          <svg width="12" height="12" viewBox="0 0 12 12"><rect x="1.500" y="1.500" width="9" height="9" fill="none" stroke="#777"/></svg>
          <svg width="12" height="12" viewBox="0 0 12 12"><path d="M1 1l10 10M11 1L1 11" stroke="#777"/></svg>
        </div>
      </div>
      <div class="gh-menu"><span>File</span><span>Edit</span><span>View</span><span>Display</span><span>Solution</span><span>Help</span></div>
      <div class="gh-tabs"><span class="active">Prm</span><span>Math</span><span>Set</span><span>Vec</span><span>Crv</span><span>Srf</span><span class="ltr first">M</span><span class="ltr">X</span><span class="ltr">T</span><span class="ltr">D</span><span class="ltr">W</span><span class="ltr">K</span></div>
      <div class="gh-panel">
        <div class="gh-group g-geo">
          <div class="gh-btns">
            <svg viewBox="0 0 24 24"><use href="#hex"/><path d="M8 8l8 8M16 8l-8 8" stroke="#fff" stroke-width="3"/></svg>
            <svg viewBox="0 0 24 24"><use href="#hex"/><ellipse cx="12" cy="12" rx="7" ry="5" fill="none" stroke="#fff" stroke-width="2"/></svg>
            <svg viewBox="0 0 24 24"><use href="#hex"/><ellipse cx="12" cy="12" rx="8" ry="4" transform="rotate(-35 12 12)" fill="none" stroke="#ddd"/><ellipse cx="12" cy="12" rx="5" ry="2.500" transform="rotate(-35 12 12)" fill="none" stroke="#ddd"/></svg>
            <svg viewBox="0 0 24 24"><use href="#hex"/><path d="M7 17L17 7M11 7h6v6" fill="none" stroke="#fff" stroke-width="2.400"/></svg>
            <svg viewBox="0 0 24 24"><use href="#hex"/><path d="M5 8h5c3 1 5 5 5 9" fill="none" stroke="#fff" stroke-width="2.200"/></svg>
            <svg viewBox="0 0 24 24"><use href="#hex"/><path d="M8 16l8-8" stroke="#fff" stroke-width="1.500"/><rect x="6" y="14" width="4" height="4" fill="#222" stroke="#fff"/><rect x="14" y="6" width="4" height="4" fill="#222" stroke="#fff"/></svg>
          </div>
          <div class="gh-bar"><span>Geometry</span><b>+</b></div>
        </div>
        <div class="gh-group g-prim">
          <div class="gh-btns">
            <svg viewBox="0 0 24 24"><use href="#hex"/><circle cx="12" cy="12" r="6" fill="#fff"/><path d="M8 16l8-8" stroke="#222" stroke-width="2"/></svg>
            <svg viewBox="0 0 24 24"><use href="#hex"/><text class="hex-text" x="12" y="17" text-anchor="middle">0.1</text></svg>
            <svg viewBox="0 0 24 24"><use href="#hex"/><text class="hex-text big" x="12" y="19" text-anchor="middle">7</text></svg>
            <svg viewBox="0 0 24 24"><use href="#hex"/><text class="hex-text big" x="12" y="19" text-anchor="middle">A</text></svg>
          </div>
          <div class="gh-bar"><span>Primitive</span><b>+</b></div>
        </div>
        <div class="gh-group g-input">
          <div class="gh-btns">
            <svg viewBox="0 0 24 24"><rect x=".5" y=".5" width="23" height="23" rx="2" fill="#8a8a8a" stroke="#222"/><path d="M12 4v8M8 9l4 5 4-5zM3 18h18" stroke="#111" fill="#111" stroke-width="1.600"/><path d="M3 20h18" stroke="#111" stroke-dasharray="1 2" stroke-width="2"/></svg>
            <svg viewBox="0 0 24 24"><rect x=".5" y=".5" width="23" height="23" rx="2" fill="#777" stroke="#222"/><rect x="8" y="4" width="8" height="16" fill="#fff" stroke="#111"/><rect x="8" y="11" width="8" height="9" fill="#222"/></svg>
            <svg viewBox="0 0 24 24"><rect x=".5" y=".5" width="23" height="23" rx="2" fill="#888" stroke="#222"/><path d="M8 8h8l-5 5c3 0 3 4 0 7" fill="none" stroke="#111" stroke-width="3"/></svg>
            <svg viewBox="0 0 24 24"><rect x=".5" y=".5" width="23" height="23" rx="2" fill="#f2c52e" stroke="#222"/><path d="M3 18l4-7 1 5 4-8 1 6 4-8 1 6 3-3" fill="none" stroke="#7a4a0a" stroke-width="1.800"/></svg>
            <svg viewBox="0 0 24 24"><circle cx="12" cy="12" r="11" fill="#888" stroke="#222"/><circle cx="12" cy="12" r="7.500" fill="#222"/></svg>
            <svg viewBox="0 0 24 24"><rect x=".5" y=".5" width="23" height="23" rx="2" fill="#555" stroke="#222"/><path d="M3 4h18v5H3zM3 10h18v5H3zM3 16h18v5H3z" fill="#aaa" stroke="#111"/></svg>
          </div>
          <div class="gh-bar"><span>Input</span><b>+</b></div>
        </div>
        <div class="gh-group g-util">
          <div class="gh-btns">
            <svg viewBox="0 0 24 24"><path d="M12 2c-2 5-5 8-6 11M13 2c3 4 5 7 5 11" fill="none" stroke="#543"/><path d="M12 2c3-2 6-1 7 1-2 2-5 2-7-1z" fill="#4a9a30"/><circle cx="7" cy="16" r="5" fill="#d01818"/><circle cx="18" cy="17" r="4.500" fill="#d01818"/></svg>
            <svg viewBox="0 0 24 24"><path d="M2 8h11V3l9 9-9 9v-5H2z" fill="#444" stroke="#111"/></svg>
            <svg viewBox="0 0 24 24"><rect x=".5" y=".5" width="23" height="23" rx="2" fill="url(#treesky)" stroke="#222"/><path d="M12 22v-9M12 13L6 7M12 13l6-6M12 15L4 11M12 15l8-4M9 10L8 4M15 10l1-6M12 13V4" stroke="#000" stroke-width="1.300"/><path d="M3 21h18" stroke="#000" stroke-width="2"/></svg>
            <svg viewBox="0 0 24 24"><path d="M2 8h11V3l9 9-9 9v-5H2z" fill="#eee" stroke="#888"/></svg>
          </div>
          <div class="gh-bar"><span>Util</span><b>+</b></div>
        </div>
      </div>
      <div class="gh-toolbar">
        <svg class="gi-folder" viewBox="0 0 20 24"><path d="M1 22V2h8l2 2v4h8v14z" fill="#f2f2f2" stroke="#999"/><path d="M1 22V9h18v13z" fill="#5eb23e" stroke="#2a6a18"/></svg>
        <svg class="gi-save" viewBox="0 0 22 22"><rect x="1" y="1" width="20" height="20" rx="1.500" fill="#2868d8" stroke="#123a90"/><rect x="4" y="1" width="14" height="8" fill="#b8d0f4"/><rect x="6" y="13" width="10" height="8" fill="#9ab8e8" stroke="#123a90"/></svg>
        <i class="gh-sep"></i>
        <div class="gh-combo"><span>17%</span><svg width="10" height="6" viewBox="0 0 10 6"><path d="M1 1l4 4 4-4" fill="none" stroke="#333"/></svg></div>
        <svg class="gi-focus" viewBox="0 0 22 22"><path d="M1.500 7.500v-6h6M14.500 1.500h6v6M20.500 14.500v6h-6M7.500 20.500h-6v-6" fill="none" stroke="#222" stroke-width="3.200"/><path d="M9 9l4 4M13 9l-4 4" stroke="#222" stroke-width="1.800"/></svg>
        <span class="gh-arrow"></span>
        <svg class="gi-eye" viewBox="0 0 24 14"><path d="M1 7c5-8 17-8 22 0-5 8-17 8-22 0z" fill="#fff" stroke="#333" stroke-width="1.400"/><circle cx="12" cy="7" r="4.500" fill="#2c9ad8" stroke="#123"/><circle cx="12" cy="7" r="2" fill="#111"/></svg>
        <span class="gh-arrow"></span>
        <svg class="gi-sketch" viewBox="0 0 22 22"><path d="M1 20c0-7 3-9 5-6 1 2-1 6-2 6" fill="none" stroke="#4a2a18" stroke-width="1.800"/><path d="M6 15L19 2l2 5L10 19z" fill="#e03838" stroke="#801010"/><path d="M8 15l10-10" stroke="#f6b0b0"/></svg>
        <i class="gh-sep"></i>
        <svg class="gi-ball" viewBox="0 0 18 18"><circle cx="9" cy="9" r="8.500" fill="url(#ghball)" stroke="#234"/></svg>
        <span class="gh-arrow"></span>
        <span class="gh-drop"></span>
      </div>
      <div class="gh-canvas">
        <svg viewBox="12 10 1137 398">
          <g fill="#b5a3e6" stroke="#9a8bbf" stroke-width="2">
            <rect x="68" y="55" width="385" height="105"/>
            <rect x="180" y="185" width="158" height="80"/>
            <path d="M325 310C340 270 350 240 370 220c30-20 60 0 75 25 25 30 25 50-5 60-20 5-40 15-60 30-30 20-65 0-55-25z"/>
            <rect x="547" y="50" width="435" height="176"/>
            <rect x="1005" y="255" width="145" height="100"/>
            <rect x="625" y="262" width="165" height="110"/>
            <rect x="805" y="258" width="178" height="150"/>
            <rect x="92" y="335" width="160" height="73"/>
            <path d="M380 408c5-40 40-80 100-110 30-30 70-55 90-30 10 30-20 60-60 90-20 25-40 40-50 50z"/>
          </g>
          <g fill="#b9a7ea" stroke="#8c7eb2" stroke-width="2">
            <rect x="695" y="55" width="122" height="72"/>
            <rect x="868" y="105" width="108" height="80"/>
            <rect x="660" y="145" width="92" height="75"/>
          </g>
          <g fill="none" stroke="#3e3e40" stroke-width="1.600">
            <path d="M217 100c0-20 10-15 25-20M287 80c20 0 20 30 45 30M195 118c50 0 90 5 137 5M195 134c50 0 90-5 137-5M195 150c50 0 90-5 137-15M368 130h44"/>
            <path d="M205 260c0 30 5 60 5 75M255 260c0 30-5 90-30 100M336 235c30 0 40 30 80 35M310 240c0 0 10 30-15 60M400 250c-10 20-10 40-15 40M457 275c20 5 20 30 35 30M528 300l5-15M480 340l15-25"/>
            <path d="M250 400c50-50 70-70 80-75M250 405c60-30 110-70 200-70M250 400c80-40 150-40 245-50 50-5 120-20 205-35M330 408c60-30 90-20 130-70M470 395c50-50 130-160 200-185"/>
            <path d="M570 280c30 5 40 0 65 5M668 285c20 0 15 30 30 30M732 315c5-20 10-15 15-15M785 300c15 0 20-5 35-8M852 290c10-5 20-10 30-10"/>
            <path d="M590 280c20-60 20-170 110-182M570 290c40-30 30-130 95-120M742 170c80-10 100-40 130-35M742 185c50-10 100-10 145-15M975 155c70 10 120 60 175 130M742 165c110 30 110 90 240 110"/>
            <path d="M852 300c10 10 10 30 30 50M852 300c15 30 20 60 30 70M918 285c25 0 20 25 25 25M918 320c20 0 15-5 25-5M918 350c20 0 15-5 25-5M830 408c100-10 200-20 320-25M978 315c10-10 10-20 20-30"/>
          </g>
          <path d="M150 335V208H1149" fill="none" stroke="#111" stroke-width="2.400"/>
          <use href="#gy" x="124" y="60" width="93" height="40"/><use href="#gy" x="205" y="190" width="105" height="33"/><use href="#gy" x="553" y="55" width="118" height="40"/><use href="#gy" x="718" y="60" width="82" height="20"/><use href="#gy" x="668" y="195" width="80" height="22"/><use href="#gy" x="628" y="340" width="102" height="28"/><use href="#gy" x="370" y="238" width="72" height="22"/><use href="#gy" x="97" y="340" width="100" height="26"/><use href="#gy" x="382" y="396" width="82" height="14"/>
          <rect x="925" y="110" width="45" height="20" fill="#fdf75c" stroke="#222" stroke-width="2"/>
          <use href="#gc" x="242" y="60" width="45" height="38"/><use href="#gc" x="332" y="107" width="36" height="44"/><use href="#gc" x="412" y="117" width="36" height="28"/><use href="#gc" x="186" y="225" width="36" height="35"/><use href="#gc" x="240" y="225" width="36" height="35"/><use href="#gc" x="300" y="225" width="36" height="35"/><use href="#gc" x="415" y="262" width="42" height="25"/><use href="#gc" x="364" y="283" width="34" height="35"/><use href="#gc" x="326" y="310" width="34" height="26"/><use href="#gc" x="530" y="268" width="38" height="24"/><use href="#gc" x="492" y="292" width="36" height="45"/><use href="#gc" x="445" y="323" width="36" height="30"/><use href="#gc" x="418" y="365" width="34" height="26"/><use href="#gc" x="698" y="87" width="33" height="20"/><use href="#gc" x="740" y="87" width="32" height="32"/><use href="#gc" x="780" y="83" width="34" height="40"/><use href="#gc" x="665" y="155" width="35" height="35"/><use href="#gc" x="708" y="150" width="34" height="42"/><use href="#gc" x="870" y="123" width="38" height="26"/><use href="#gc" x="885" y="160" width="33" height="20"/><use href="#gc" x="936" y="135" width="36" height="44"/><use href="#gc" x="633" y="268" width="36" height="33"/><use href="#gc" x="697" y="298" width="35" height="35"/><use href="#gc" x="745" y="286" width="40" height="30"/><use href="#gc" x="820" y="275" width="32" height="33"/><use href="#gc" x="882" y="265" width="36" height="33"/><use href="#gc" x="882" y="300" width="36" height="33"/><use href="#gc" x="882" y="337" width="36" height="33"/><use href="#gc" x="882" y="372" width="36" height="33"/><use href="#gc" x="942" y="290" width="36" height="45"/><use href="#gc" x="942" y="340" width="36" height="45"/><use href="#gc" x="1115" y="325" width="35" height="27"/>
          <use href="#gs" x="72" y="112" width="122" height="11"/><use href="#gs" x="72" y="128" width="120" height="11"/><use href="#gs" x="75" y="145" width="122" height="11"/><use href="#gs" x="97" y="370" width="92" height="11"/><use href="#gs" x="97" y="386" width="95" height="11"/>
          <g fill="#c8c8c8" stroke="#666" stroke-width="1.400"><rect x="293" y="340" width="33" height="12"/><rect x="810" y="332" width="32" height="11"/><rect x="810" y="346" width="32" height="11"/><rect x="810" y="362" width="32" height="11"/></g>
          <path d="M970 275l12-9 10 9-10 9z" fill="#111"/>
          <circle cx="1060" cy="285" r="60" fill="none" stroke="#111" stroke-width="6" stroke-dasharray="30 6"/>
          <circle cx="1060" cy="285" r="55" fill="url(#knob)" stroke="#fff" stroke-width="6"/>
          <path d="M1060 232l8 12h-16zM1060 338l8-12h-16zM1007 285l12-8v16zM1113 285l-12-8v16z" fill="#fff"/>
          <rect x="14" y="326" width="20" height="82" fill="#999" stroke="#111" stroke-width="2"/>
          <rect x="16" y="330" width="16" height="35" fill="#ccc"/>
        </svg>
      </div>
      <div class="gh-status">
        <span class="dots">...</span><span class="version">1.0.0007</span>
        <svg class="grip" width="9" height="9" viewBox="0 0 9 9"><path d="M7 1h1.500v1.500H7zM4 4h1.500v1.500H4zM7 4h1.500v1.500H7zM1 7h1.500v1.500H1zM4 7h1.500v1.500H4zM7 7h1.500v1.500H7z" fill="#888"/></svg>
      </div>
    </div>

    <script src="script.js"></script>
  </body>
</html>
```

FILE: styles.css
```css
* {
  box-sizing: border-box;
}
html,
body {
  margin: 0;
  padding: 0;
}
body {
  width: 1365px;
  height: 728px;
  overflow: hidden;
  position: relative;
  background-color: #e9ebf0;
  font-family: "Open Sans", "Noto Sans", sans-serif;
  font-size: 12px;
  letter-spacing: -0.24px;
  color: #111;
}
.defs {
  position: absolute;
}
.app {
  display: flex;
  flex-direction: column;
  height: 728px;
}

/* title and menu */
.titlebar {
  position: relative;
  height: 22px;
  display: flex;
  align-items: center;
  padding-left: 2px;
  background-color: #fff;
}
.title-accent {
  position: absolute;
  left: 563px;
  top: 0;
  width: 48px;
  height: 1px;
  background-color: #1e90e0;
}
.rhino-logo {
  width: 18px;
  height: 18px;
  margin-right: 3px;
}
.win-buttons {
  margin-left: auto;
  display: flex;
  gap: 34px;
  padding-right: 18px;
}
.menubar {
  height: 20px;
  display: flex;
  align-items: center;
  gap: 14px;
  padding-left: 6px;
  background-color: #fff;
  letter-spacing: -0.32px;
}
.command {
  position: relative;
  height: 47px;
  margin: 3px 0 0 7px;
  background-color: #fff;
  line-height: 15px;
}
.cmd-history {
  height: 30px;
  padding: 0 0 0 1px;
  border-bottom: 1px solid #bcc6d8;
}
.cmd-input {
  font-weight: 700;
  padding: 1px 0 0 1px;
}
.cmd-scroll {
  position: absolute;
  top: 29px;
  right: 1px;
  width: 14px;
  display: flex;
  flex-direction: column;
  font-size: 8px;
  line-height: 9px;
  text-align: center;
}

/* toolbar */
.toolbar-tabs {
  position: relative;
  height: 20px;
  margin-top: 6px;
  padding-left: 7px;
  display: flex;
  align-items: flex-end;
  border-bottom: 1px solid #c4cada;
  letter-spacing: -0.36px;
}
.tab {
  height: 17px;
  padding: 0 10.3px;
  line-height: 19px;
  color: #333;
}
.tab.active {
  border: 1px solid #c4cada;
  border-bottom: 0;
  border-radius: 4px 4px 0 0;
  background-color: #f3f4f7;
  margin-right: 3px;
  padding: 0 8px 0 9px;
}
.gear {
  position: absolute;
  right: 0;
  top: 2px;
  width: 16px;
  height: 16px;
}
.iconbar {
  height: 30px;
  padding: 1px 0 0 7px;
  margin-bottom: 10px;
  display: flex;
}
.tool {
  position: relative;
  width: 28px;
  height: 28px;
  display: flex;
  align-items: center;
  justify-content: center;
}
.tool svg {
  width: 24px;
  height: 24px;
}
.more::after {
  content: "";
  position: absolute;
  right: 1px;
  bottom: 1px;
  border-left: 6px solid transparent;
  border-bottom: 6px solid #6a6a6a;
}
.help-mark {
  font-family: "Liberation Serif", serif;
  font-weight: 700;
  font-size: 20px;
  fill: #fff;
}
.help-small {
  font-family: "Liberation Serif", serif;
  font-weight: 700;
  font-size: 10px;
  fill: #fff;
}

/* main area */
.main {
  display: flex;
  height: 502px;
}
.sidetools {
  width: 65px;
  padding: 6px 0 0 0;
  display: grid;
  grid-template-columns: 29px 29px;
  grid-auto-rows: 28px;
  align-content: start;
}
.stool {
  position: relative;
  display: flex;
  align-items: center;
  justify-content: center;
}
.stool svg {
  width: 24px;
  height: 24px;
}
.views {
  width: 1101px;
  display: grid;
  grid-template-columns: 550px 547px;
  grid-template-rows: 249px 248px;
  gap: 4px;
}
.viewport {
  position: relative;
  overflow: hidden;
  background-color: #99a1aa;
}
.scene {
  display: block;
  width: 100%;
  height: 100%;
}
.vp-top {
  background-image: linear-gradient(to right, #8b929b 1px, transparent 1px),
    linear-gradient(to bottom, #8b929b 1px, transparent 1px);
  background-size: 23.6px 23.6px;
  background-position: 4px 14px;
}
.vp-front {
  background-image: linear-gradient(to right, #80858e 1px, transparent 1px),
    linear-gradient(to bottom, #80858e 1px, transparent 1px),
    linear-gradient(to right, #8e959e 1px, transparent 1px),
    linear-gradient(to bottom, #8e959e 1px, transparent 1px);
  background-size: 85px 85px, 85px 85px, 8.5px 8.5px, 8.5px 8.5px;
  background-position: 71px 35px, 71px 35px, 3.7px 1.3px, 3.7px 1.3px;
}
.vp-right {
  background-image: linear-gradient(to right, #80858e 1px, transparent 1px),
    linear-gradient(to bottom, #80858e 1px, transparent 1px),
    linear-gradient(to right, #8e959e 1px, transparent 1px),
    linear-gradient(to bottom, #8e959e 1px, transparent 1px);
  background-size: 75px 75px, 75px 75px, 7.5px 7.5px, 7.5px 7.5px;
  background-position: 24px 61px, 24px 61px, 2.2px 1px, 2.2px 1px;
}
.vp-label {
  position: absolute;
  top: 0;
  left: 0;
  height: 18px;
  display: flex;
  align-items: center;
  gap: 5px;
  padding: 0 4px 0 7px;
  background-color: #c9ced7;
  color: #555;
  font-weight: 600;
  border-radius: 0 0 3px 0;
}
.vp-label i {
  display: block;
  width: 10px;
  height: 14px;
  border-left: 1px solid #555;
  position: relative;
}
.vp-label i::after {
  content: "";
  position: absolute;
  left: 2px;
  top: 5px;
  border-left: 4px solid transparent;
  border-right: 4px solid transparent;
  border-top: 4px solid #555;
}
.axis-label {
  font-family: "Open Sans", sans-serif;
  font-size: 34px;
  fill: #5c5c60;
}

/* layers panel */
.layers {
  width: 193px;
  margin-left: 6px;
  display: flex;
  flex-direction: column;
}
.layers-head {
  height: 19px;
  display: flex;
  align-items: center;
  gap: 3px;
  padding-left: 4px;
  color: #333;
}
.layers-head i {
  flex: 1;
  height: 4px;
  border-top: 1px solid #c4cada;
  border-bottom: 1px solid #c4cada;
}
.layers-tabs {
  height: 22px;
  display: flex;
  padding-left: 0;
  border-bottom: 1px solid #c4cada;
}
.ltab {
  width: 28px;
  display: flex;
  align-items: center;
  justify-content: center;
}
.ltab.active {
  height: 22px;
  border: 1px solid #c4cada;
  border-bottom: 1px solid #f3f4f7;
  background-color: #f3f4f7;
}
.ltab svg {
  width: 16px;
  height: 16px;
}
.layers-tools {
  height: 33px;
  display: flex;
  align-items: center;
  gap: 7px;
  padding-left: 10px;
}
.layers-tools svg {
  width: 16px;
  height: 16px;
}
.layers-box {
  flex: 1;
  margin: 0 0 5px 2px;
  display: flex;
  flex-direction: column;
  background-color: #fff;
  border-left: 1px solid #c4cada;
  border-bottom: 1px solid #c4cada;
  color: #333;
}
.layers-header {
  height: 24px;
  display: grid;
  grid-template-columns: 78px 17px 17px 17px 17px 1fr;
  align-items: center;
  overflow: hidden;
  white-space: nowrap;
}
.layers-header .col-name {
  padding-left: 4px;
}
.col {
  height: 24px;
  border-left: 1px solid #dde;
}
.col-mat {
  padding-left: 5px;
  height: 24px;
  line-height: 24px;
  border-left: 1px solid #dde;
}
.layer-row {
  height: 19px;
  display: grid;
  grid-template-columns: 78px 17px 17px 17px 17px 1fr;
  align-items: center;
  justify-items: center;
  border-bottom: 1px solid #eef0f3;
}
.layer-row .col-name {
  justify-self: start;
  padding-left: 7px;
}
.layer-row svg {
  width: 14px;
  height: 14px;
}
.layer-row.default .col-name {
  font-weight: 700;
}
.lcheck {
  font-size: 13px;
  color: #111;
  font-weight: 700;
}
.swatch {
  display: block;
  width: 12px;
  height: 12px;
  border: 1px solid #222;
}
.mat {
  justify-self: start;
  margin-left: 3px;
  width: 13px;
  height: 13px;
  border-radius: 50%;
  background-color: #f4f4f4;
}
.sw-black { background-color: #000; }
.sw-red { background-color: #c80000; }
.sw-purple { background-color: #7b28c8; }
.sw-blue { background-color: #0000ff; }
.sw-green { background-color: #008000; }
.sw-white { background-color: #fff; }
.layers-fill {
  flex: 1;
}
.hscroll {
  height: 17px;
  display: flex;
  align-items: center;
  justify-content: space-between;
  background-color: #f0f0f0;
  padding: 0 6px;
  position: relative;
  font-weight: 700;
}
.hscroll-thumb {
  position: absolute;
  left: 16px;
  top: 0;
  width: 71px;
  height: 17px;
  background-color: #cdcdcd;
}

/* bottom strips */
.vp-tabs {
  height: 20px;
  display: flex;
  align-items: center;
  gap: 13px;
  padding-left: 74px;
  color: #333;
  letter-spacing: -0.3px;
}
.vp-tabs .active {
  padding: 0 3px;
  margin-left: 0;
  border-bottom: 1px solid #bbc2d0;
  border-right: 1px solid #bbc2d0;
  border-radius: 0 0 4px 0;
}
.plus {
  color: #888;
  font-size: 11px;
  margin-left: 3px;
}
.osnap {
  height: 20px;
  margin-top: 5px;
  display: flex;
  align-items: center;
  gap: 6px;
  padding-left: 9px;
  color: #333;
  letter-spacing: -0.4px;
}
.osnap label {
  display: flex;
  align-items: center;
  gap: 2px;
}
.osnap label::before {
  content: "";
  display: block;
  flex: none;
  width: 13px;
  height: 13px;
  border: 1px solid #333;
  background-color: #fff;
}
.osnap .on::before {
  content: "✓";
  font-size: 11px;
  line-height: 11px;
  text-align: center;
}
.osnap .project {
  margin-left: 0;
}
.osnap .project::before {
  border: 2px solid #2a62a8;
  background-color: #888;
  box-shadow: inset 0 0 0 1px #fff;
}
.osnap .disable {
  margin-left: 7px;
  color: #444;
}
.osnap .disable::before {
  border-color: #aaa;
  background-color: #e4e4e4;
}
.statusbar {
  height: 21px;
  margin-top: 2px;
  display: grid;
  grid-template-columns: 50px 88px 88px 88px 88px 169px 64px 46px 47px 48px 73px 59px 92px 37px 314px 1fr;
  border-top: 1px solid #c4cada;
  color: #333;
}
.statusbar span {
  display: flex;
  align-items: center;
  justify-content: center;
  border-right: 1px solid #c4cada;
}
.statusbar .layer-cell {
  justify-content: flex-start;
  padding-left: 4px;
  gap: 2px;
}
.layer-cell i {
  display: block;
  width: 14px;
  height: 14px;
  background-color: #000;
}
.statusbar .pressed {
  background-color: #cdd8ec;
  font-weight: 700;
  color: #222;
  letter-spacing: -0.4px;
}
.statusbar .memory {
  justify-content: flex-start;
  padding-left: 4px;
  letter-spacing: -0.36px;
}

/* grasshopper window */
.gh {
  position: absolute;
  left: 423px;
  top: 290px;
  width: 382px;
  height: 355px;
  display: flex;
  flex-direction: column;
  background-color: #f0f0f0;
  box-shadow: 1px 1px 6px rgba(0, 0, 0, 0.5);
}
.gh-title {
  height: 29px;
  display: flex;
  align-items: center;
  padding-left: 8px;
  background-color: #fff;
  color: #888;
  letter-spacing: -0.32px;
}
.gh-winbtns {
  margin-left: auto;
  display: flex;
  gap: 33px;
  padding-right: 17px;
}
.gh-menu {
  height: 27px;
  display: flex;
  align-items: center;
  gap: 18.5px;
  padding-left: 13px;
  background-color: #fff;
}
.gh-tabs {
  height: 22px;
  display: flex;
  align-items: flex-end;
  gap: 16px;
  padding-left: 4px;
  color: #888;
  letter-spacing: -0.4px;
}
.gh-tabs span {
  padding-bottom: 1px;
}
.gh-tabs .active {
  width: 33px;
  height: 22px;
  margin-right: -8px;
  padding: 0;
  text-align: center;
  line-height: 20px;
  color: #111;
  background-color: #fafafa;
  border: 1px solid #bbb;
  border-bottom: 0;
  border-radius: 6px 6px 0 0;
}
.gh-tabs .ltr {
  width: 12px;
  text-align: center;
}
.gh-tabs .first {
  margin-left: 3px;
}
.gh-panel {
  height: 82px;
  display: flex;
  gap: 4px;
  padding: 3px 0 0 2px;
  border: 1px solid #999;
  border-radius: 6px 6px 0 0;
  margin: 0 0 0 1px;
  background: linear-gradient(to bottom, #f4f4f4, #c8c8c8);
}
.gh-group {
  height: 72px;
  display: flex;
  flex-direction: column;
  border: 1px solid #888;
  border-radius: 5px;
  overflow: hidden;
  background: linear-gradient(to bottom, #f0f0f0, #d4d4d4);
}
.g-geo { width: 98px; }
.g-prim { width: 60px; }
.g-input { width: 98px; }
.g-util { width: 70px; margin-left: -1px; }
.gh-btns {
  flex: 1;
  display: grid;
  grid-template-rows: 28px 28px;
  padding: 2px 0 0 2px;
  align-items: center;
  justify-items: start;
}
.g-geo .gh-btns { grid-template-columns: 38px 28px 28px; }
.g-prim .gh-btns { grid-template-columns: 29px 28px; }
.g-input .gh-btns { grid-template-columns: 37px 28px 28px; padding-left: 3px; }
.g-util .gh-btns { grid-template-columns: 38px 28px; padding-left: 4px; }
.gh-btns svg {
  width: 24px;
  height: 24px;
}
.gh-bar {
  height: 13px;
  display: flex;
  align-items: center;
  justify-content: center;
  position: relative;
  padding-right: 10px;
  background-color: #262626;
  color: #eee;
  font-size: 10.5px;
  letter-spacing: 0;
}
.gh-bar b {
  position: absolute;
  right: 3px;
  color: #aaa;
}
.gh-toolbar {
  height: 33px;
  margin-top: 5px;
  display: flex;
  align-items: center;
  gap: 8px;
  padding-left: 7px;
  background-color: #fff;
  border-top: 1px solid #999;
  position: relative;
}
.gi-folder { width: 19px; height: 23px; }
.gi-save { width: 22px; height: 22px; margin-left: 1px; }
.gh-sep {
  display: block;
  width: 1px;
  height: 22px;
  background-color: #aaa;
}
.gh-combo {
  width: 135px;
  height: 22px;
  display: flex;
  align-items: center;
  justify-content: space-between;
  padding: 0 5px 0 3px;
  border: 1px solid #888;
  margin-left: -4px;
}
.gi-focus { width: 22px; height: 22px; margin-left: -1px; }
.gi-eye { width: 24px; height: 15px; }
.gi-sketch { width: 22px; height: 22px; }
.gi-ball { width: 18px; height: 18px; }
.gh-arrow {
  display: block;
  margin-left: -3px;
  border-left: 3px solid transparent;
  border-right: 3px solid transparent;
  border-top: 3px solid #111;
}
.gh-drop {
  position: absolute;
  right: 3px;
  bottom: 1px;
  width: 10px;
  height: 10px;
  background-color: #ccc;
  border-top: 1px solid #888;
}
.gh-drop::after {
  content: "";
  position: absolute;
  left: 2px;
  top: 4px;
  border-left: 3px solid transparent;
  border-right: 3px solid transparent;
  border-top: 4px solid #111;
}
.gh-canvas {
  height: 134px;
  margin: 0 2px 0 1px;
  background-color: #d4d0c8;
  border-bottom: 1px solid #fff;
}
.gh-canvas svg {
  display: block;
  width: 100%;
  height: 133px;
}
.gh-status {
  height: 23px;
  display: flex;
  align-items: center;
  padding: 0 2px 0 7px;
  background-color: #f0f0f0;
}
.dots {
  font-weight: 700;
}
.version {
  margin-left: auto;
  color: #667;
  padding-right: 21px;
}
.hex-text {
  font-family: "Liberation Serif", serif;
  font-weight: 700;
  font-size: 12px;
  fill: #fff;
}
.hex-text.big {
  font-size: 19px;
}
```

FILE: script.js
```js
// floor grid of the perspective view, lines run to two vanishing points
var vp1 = [-64, 9];
var vp2 = [1215, 4];
var origin = [921, 355];
var a = 0.1486;
var b = 0.1346;

function project(u, v) {
  var s = u * a;
  var t = v * b;
  var w = 1 + s + t;
  return [
    (origin[0] + s * vp1[0] + t * vp2[0]) / w,
    (origin[1] + s * vp1[1] + t * vp2[1]) / w,
    w,
  ];
}

function addLine(group, p, q, color) {
  var line = document.createElementNS("http://www.w3.org/2000/svg", "line");
  line.setAttribute("x1", p[0].toFixed(1));
  line.setAttribute("y1", p[1].toFixed(1));
  line.setAttribute("x2", q[0].toFixed(1));
  line.setAttribute("y2", q[1].toFixed(1));
  line.setAttribute("stroke", color);
  group.appendChild(line);
}

var grid = document.getElementById("perspGrid");
for (var k = -60; k <= 200; k++) {
  var c = k / 10;
  var major = k % 5 === 0;
  var color = major ? "#848b94" : "#929aa3";
  var wMax = major ? 4 : 1.12;
  // lines of constant u
  var vNear = (0.1 - 1 - c * a) / b;
  var vFar = (wMax - 1 - c * a) / b;
  if (vFar > vNear) addLine(grid, project(c, vNear), project(c, vFar), color);
  // lines of constant v
  var uNear = (0.1 - 1 - c * b) / a;
  var uFar = (wMax - 1 - c * b) / a;
  if (uFar > uNear) addLine(grid, project(uNear, c), project(uFar, c), color);
}
```
